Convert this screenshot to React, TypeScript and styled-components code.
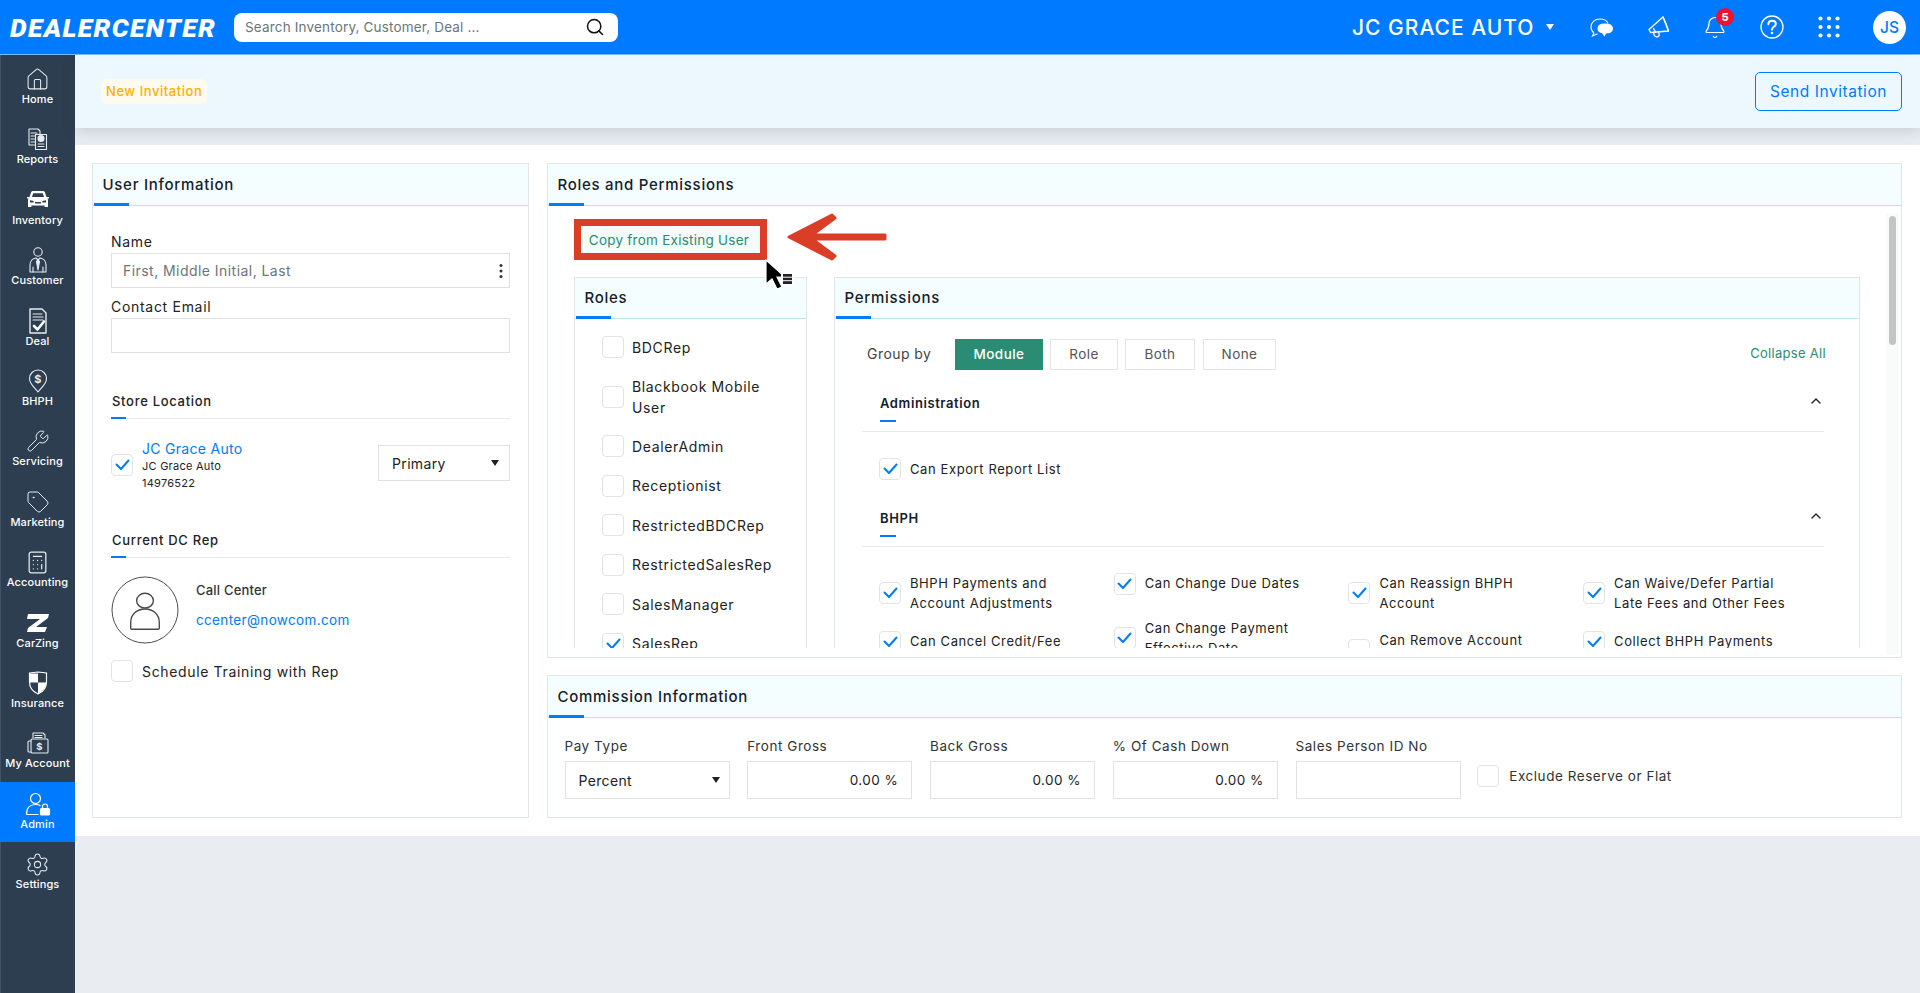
import React from "react";
import styled, { createGlobalStyle } from "styled-components";
import { House, Wrench, Tag, Calculator, Settings, Bell, Search, ChevronUp } from "lucide-react";

const FONT = `Inter, "Noto Sans", sans-serif`;
const BLUE = "#007bff";
const GREEN = "#2a8c73";

const Global = createGlobalStyle`
  html, body { margin: 0; padding: 0; height: 100%; }
  body { font-family: ${FONT}; background: #e9edf2; color: #222; overflow: hidden; }
  * { box-sizing: border-box; }
`;

const Page = styled.div`
  width: 1920px; height: 993px; display: flex; flex-direction: column; overflow: hidden;
`;

/* ---------- top bar ---------- */
const TopBar = styled.header`
  height: 55px; flex: none; background: ${BLUE}; display: flex; align-items: center; padding: 0 14px 0 10px; color: #fff;
  border-bottom: 1px solid #7fbdff;
`;
const Logo = styled.div`
  font-family: Roboto, sans-serif; font-style: italic; font-weight: 900; font-size: 26.5px; letter-spacing: 1.35px; width: 224px; color: #fff; white-space: nowrap;
`;
const SearchBox = styled.div`
  width: 384px; height: 29px; background: #fff; border-radius: 8px; display: flex; align-items: center; justify-content: space-between;
  padding: 0 13px 0 11px; color: #111;
`;
const SearchInput = styled.input`
  border: 0; outline: 0; flex: 1; font: 400 13.5px ${FONT}; letter-spacing: 0.17px; background: transparent; padding: 0;
  &::placeholder { color: #6c757d; opacity: 1; }
`;
const TopRight = styled.div`
  margin-left: auto; display: flex; align-items: center;
`;
const Dealer = styled.div`
  font-size: 21px; font-weight: 500; letter-spacing: 1px; width: 183px; white-space: nowrap; margin-right: 11px;
`;
const Caret = styled.span`
  width: 0; height: 0; border-left: 4.5px solid transparent; border-right: 4.5px solid transparent; border-top: 6px solid ${(p: { $color?: string }) => p.$color || "#fff"};
  display: block;
`;
const TopIcons = styled.div`
  display: flex; align-items: center; gap: 33px; margin-left: 35px; margin-right: 32px;
`;
const TopIcon = styled.div`
  position: relative; width: 24px; height: 28px; display: flex; align-items: center; justify-content: center;
`;
const Badge = styled.span`
  position: absolute; left: 13px; top: -5px; width: 18px; height: 18px; border-radius: 50%; background: #ee1133; color: #fff;
  font-size: 11px; font-weight: 800; display: flex; align-items: center; justify-content: center;
`;
const UserCircle = styled.div`
  width: 33px; height: 33px; border-radius: 50%; background: #fff; color: ${BLUE}; font-size: 15.5px; font-weight: 500;
  display: flex; align-items: center; justify-content: center;
`;

/* ---------- body ---------- */
const Body = styled.div`
  flex: 1; display: flex; min-height: 0;
`;
const Sidebar = styled.nav`
  width: 75px; flex: none; background: #2c3e50; padding-top: 2px; border-left: 1px solid #3f5468;
`;
const NavItem = styled.div<{ $active?: boolean }>`
  height: 60.4px; margin-left: -1px; background: ${(p) => (p.$active ? BLUE : "transparent")}; color: #fff; display: flex; flex-direction: column; align-items: center;
  padding-top: 7px; font-size: 11px; font-weight: 500; letter-spacing: 0.12px; line-height: 14px;
`;
const NavIcon = styled.div`
  height: 30px; width: 100%; display: flex; align-items: center; justify-content: center; margin-bottom: -2px;
`;
const Main = styled.main`
  flex: 1; min-width: 0; display: flex; flex-direction: column;
`;
const SubHeader = styled.div`
  height: 73px; flex: none; background: #ecf8fe; display: flex; align-items: center; justify-content: space-between;
  padding: 0 18px 0 26px; box-shadow: 0 4px 12px rgba(60, 70, 90, 0.18); position: relative;
`;
const Chip = styled.div`
  height: 25px; margin-top: -1px; padding: 0 5px; background: #fdfaf0; border-radius: 6px; color: #ffb000; font-size: 13px; font-weight: 500; display: flex; align-items: center; letter-spacing: 0.55px;
`;
const SendButton = styled.button`
  width: 147px; height: 39px; background: transparent; border: 1px solid ${BLUE}; border-radius: 5px; color: ${BLUE}; font: 400 15.5px ${FONT}; letter-spacing: 0.55px; padding: 0;
`;
const Content = styled.div`
  margin-top: 17px; background: #fff; padding: 18px 18px 18px 17px; display: grid; grid-template-columns: 437px 1fr; column-gap: 18px;
`;
const Column = styled.div`
  display: flex; flex-direction: column; gap: 17px; min-width: 0;
`;
const Card = styled.section`
  border: 1px solid #dfe5e8; background: #fff; min-width: 0;
`;
const CardHeader = styled.div<{ $h?: number }>`
  height: ${(p) => p.$h || 42}px; background: #f4fefe; border-bottom: 1px solid #bfe5e3; position: relative; display: flex; align-items: center;
  padding-left: 9.5px; padding-bottom: 1px; font-size: 15px; font-weight: 500; color: #16202b; letter-spacing: 0.72px;
  &::after { content: ""; position: absolute; left: 1px; bottom: -1px; width: 35px; height: 3px; background: ${BLUE}; }
`;

/* ---------- left card ---------- */
const LeftCard = styled(Card)`
  height: 655px;
`;
const LeftBody = styled.div`
  padding: 27px 18px 0 18px;
`;
const FieldLabel = styled.div`
  font-size: 14px; line-height: 18px; color: #222; margin-bottom: 2px; letter-spacing: 0.7px;
`;
const TextBox = styled.div<{ $mb?: number }>`
  height: 35px; border: 1px solid #dfe1e3; display: flex; align-items: center; padding: 0 6px 0 11px; margin-bottom: ${(p) => p.$mb ?? 10}px;
`;
const BoxInput = styled.input`
  border: 0; outline: 0; flex: 1; min-width: 0; padding: 0 0 1px; background: transparent; font: 400 14px ${FONT}; letter-spacing: 0.45px; color: #333;
  &::placeholder { color: #6c757d; opacity: 1; }
`;
const MiniHeading = styled.div<{ $mt: number }>`
  margin-top: ${(p) => p.$mt}px; height: 26px; border-bottom: 1px solid #e8eaec; position: relative; font-size: 13px; font-weight: 500; color: #222; letter-spacing: 0.7px; line-height: 16px; padding-left: 1px;
  &::after { content: ""; position: absolute; left: 0; bottom: -1px; width: 15px; height: 2px; background: ${BLUE}; }
`;
const Box = styled.span`
  width: 22px; height: 22px; flex: none; border: 1px solid #e1e3e6; border-radius: 4px; background: #fff; display: flex; align-items: center; justify-content: center;
`;
const StoreRow = styled.div`
  margin-top: 21px; display: flex; align-items: center; height: 50px;
`;
const StoreText = styled.div`
  margin-left: 9px; flex: 1; font-size: 11px; line-height: 17px; color: #222; letter-spacing: 0.25px;
`;
const StoreLink = styled.div`
  color: ${BLUE}; font-size: 14px; line-height: 19px; letter-spacing: 0.3px;
`;
const StoreSelect = styled.div`
  margin-top: -4px;
`;
const SelectBox = styled.div<{ $w: number; $h: number; $pad?: number }>`
  width: ${(p) => p.$w}px; height: ${(p) => p.$h}px; border: 1px solid #dfe1e3; display: flex; align-items: center; justify-content: space-between; flex: none;
  padding: 0 ${(p) => p.$pad ?? 10}px 0 13px; font-size: 14px; color: #222; letter-spacing: 0.35px; background: #fff;
`;
const RepRow = styled.div`
  margin-top: 18px; display: flex; align-items: flex-start; gap: 17px;
`;
const RepText = styled.div`
  padding-top: 5px; font-size: 13px; font-weight: 500; line-height: 18px; color: #333; letter-spacing: 0.2px;
`;
const RepMail = styled.div`
  color: ${BLUE}; font-size: 13.5px; font-weight: 400; margin-top: 12px; letter-spacing: 0.35px;
`;
const CheckLine = styled.div`
  margin-top: 16px; display: flex; align-items: center; gap: 9px; font-size: 14px; letter-spacing: 0.65px; color: #222;
`;

/* ---------- roles and permissions ---------- */
const RolesCard = styled(Card)`
  height: 495px;
`;
const RolesBody = styled.div`
  height: 451px; display: flex; align-items: flex-start; padding-bottom: 9px;
`;
const ScrollArea = styled.div`
  width: 1338px; height: 442px; overflow: hidden; padding-left: 26px; position: relative; flex: none;
`;
const ScrollTrack = styled.div`
  width: 13px; height: 442px; margin-top: 7px; background: #fafafa; padding: 3px 3px 0 3px; flex: none;
`;
const ScrollThumb = styled.div`
  height: 129px; background: #c4c4c4; border-radius: 4px;
`;
const CopyRow = styled.div`
  position: relative; margin-top: 13px; height: 41px;
`;
const CopyButton = styled.button`
  width: 193px; height: 41px; border: 7px solid #db3e26; background: #f4fcfa; color: ${GREEN}; font: 400 13.5px ${FONT}; letter-spacing: 0.25px; padding: 0 3px 0 0;
`;
const ArrowMark = styled.svg`
  position: absolute; left: 210px; top: -10px;
`;
const CursorMark = styled.svg`
  position: absolute; left: 190px; top: 40px; z-index: 3;
`;
const Split = styled.div`
  margin-top: 17px; display: grid; grid-template-columns: 233px 1026px; column-gap: 27px;
`;
const RoleList = styled.div`
  padding: 17px 0 0 27px; display: flex; flex-direction: column; gap: 17.5px;
`;
const RoleRow = styled.div`
  display: flex; align-items: center; gap: 8px; font-size: 14px; line-height: 21px; color: #222; letter-spacing: 0.65px; min-height: 22px;
`;
const PermBody = styled.div`
  padding: 20px 35px 0 27px;
`;
const Toolbar = styled.div`
  display: flex; align-items: center; height: 31px; padding-left: 5px; font-size: 14px; color: #444; letter-spacing: 0.45px;
`;
const GroupLabel = styled.span`
  width: 88px; white-space: nowrap; padding-bottom: 2px;
`;
const Segment = styled.div<{ $on?: boolean; $w: number; $gap?: number }>`
  width: ${(p) => p.$w}px; height: 31px; margin-right: ${(p) => p.$gap ?? 7}px; display: flex; align-items: center; justify-content: center; padding-bottom: 2px; font-size: 13.5px; font-weight: ${(p) => (p.$on ? 500 : 400)};
  background: ${(p) => (p.$on ? GREEN : "#fff")}; color: ${(p) => (p.$on ? "#fff" : "#555")}; border: 1px solid ${(p) => (p.$on ? GREEN : "#e2e4e6")};
`;
const CollapseAll = styled.span`
  margin-left: auto; margin-right: -2px; color: ${GREEN}; font-size: 13px; padding-bottom: 3px; letter-spacing: 0.3px;
`;
const SectionHead = styled.div<{ $mt: number }>`
  margin-top: ${(p) => p.$mt}px; height: 39px; border-bottom: 1px solid #e6e8ea; position: relative; display: flex; justify-content: space-between; padding: 0 0 0 18px;
  font-size: 13px; font-weight: 600; line-height: 20px; color: #16202b; letter-spacing: 0.6px;
  &::after { content: ""; position: absolute; left: 18px; bottom: 9px; width: 16px; height: 2px; background: ${BLUE}; }
`;
const Perms = styled.div`
  padding: 26px 0 0 17px; display: grid; grid-template-columns: repeat(4, 234.7px); row-gap: 5px;
`;
const Perm = styled.div<{ $top?: number }>`
  display: flex; align-items: center; gap: 9px; font-size: 13px; line-height: 20px; color: #222; letter-spacing: 0.6px; margin-top: ${(p) => p.$top || 0}px; padding-right: 10px; align-self: start;
`;
const PermWide = styled(Perm)`
  grid-column: span 2;
`;
const PermSolo = styled(Perm)`
  align-items: flex-start;
`;
const PermLine = styled.span`
  display: block; white-space: nowrap;
`;

/* ---------- commission ---------- */
const CommissionCard = styled(Card)`
  height: 143px;
`;
const CommissionRow = styled.div`
  padding: 19px 0 0 16.5px; display: flex; gap: 17.75px;
`;
const CommissionField = styled.div`
  width: 165px; flex: none;
`;
const CommissionLabel = styled.div`
  font-size: 13.5px; line-height: 18px; margin-bottom: 6px; color: #333; letter-spacing: 0.55px; white-space: nowrap;
`;
const NumberBox = styled.input`
  width: 165px; height: 38px; border: 1px solid #dfe1e3; outline: 0; text-align: right; padding: 0 13px 0 0; font: 400 13.5px ${FONT}; color: #222; letter-spacing: 0.45px; display: block;
`;
const ExcludeCheck = styled.div`
  display: flex; align-items: center; gap: 10px; margin: 28px 0 0 -1px; height: 22px; font-size: 13.5px; color: #333; letter-spacing: 0.55px;
`;

/* ---------- drawings ---------- */
const Check = () => (
  <svg width="15" height="12" viewBox="0 0 15 12" fill="none"><path d="M1.5 5.5 L6 10 L13.5 1.5" stroke={BLUE} strokeWidth="2" strokeLinecap="round" strokeLinejoin="round" /></svg>
);
const CheckBox = ({ on }: { on?: boolean }) => <Box>{on && <Check />}</Box>;

const line = { fill: "none", stroke: "#e6ebef", strokeWidth: 1.1, strokeLinecap: "round" as const, strokeLinejoin: "round" as const };

const NavDraw: Record<string, React.ReactNode> = {
  Home: <House size={25} strokeWidth={1} color="#e6ebef" />,
  Reports: (
    <svg width="24" height="24" viewBox="0 0 24 24" {...line}>
      <path d="M3 2h9l2 2v14H3z" /><path d="M5 6h6M5 9h4M5 12h4M5 15h4" />
      <path d="M9.5 7.5h11v15h-11z" fill="#2c3e50" /><circle cx="15" cy="11.5" r="3" fill="#e6ebef" /><path d="M12 17h6M12 19.5h6" />
    </svg>
  ),
  Inventory: (
    <svg width="24" height="20" viewBox="0 0 24 20">
      <path fill="#fff" d="M5 2.5C5.4 1.4 6.3 1 7.4 1h9.2c1.1 0 2 .4 2.4 1.5L20.5 7H23v1.5h-1.6l.6 1.2V17h-3.4v-1.6H5.4V17H2V9.7l.6-1.2H1V7h2.5zM6 7h12l-1.2-3.8H7.2zM4 10.2v2.2h3.6v-1.4zM20 10.2 16.4 11v1.4H20zM9 12v1.4h6V12z" fillRule="evenodd" />
    </svg>
  ),
  Customer: (
    <svg width="24" height="28" viewBox="0 0 24 28" {...line}>
      <circle cx="12" cy="6" r="4.2" />
      <path d="M4 26v-7c0-4 3-6.5 6-7l2 2 2-2c3 .5 6 3 6 7v7z" />
      <path d="M12 14l-1.5 1.5L12 24l1.5-8.5z" fill="#e6ebef" /><path d="M7 21v5M17 21v5" />
    </svg>
  ),
  Deal: (
    <svg width="22" height="28" viewBox="0 0 22 28" {...line}>
      <path d="M3 2h12l4 4v20H3z" strokeWidth="1.4" /><path d="M6 7h9M6 10h10M6 13h10" />
      <path d="M7 19l3.5 3.5L17 14.5" strokeWidth="2.6" stroke="#fff" />
    </svg>
  ),
  BHPH: (
    <svg width="22" height="26" viewBox="0 0 22 26" {...line}>
      <path d="M11 24C7 19 2.5 16 2.5 10.5a8.5 8.5 0 0 1 17 0C19.500 16 15 19 11 24z" />
      <text x="11" y="14.5" textAnchor="middle" fontSize="11" fontWeight="700" fill="#e6ebef" stroke="none" fontFamily="Inter">$</text>
    </svg>
  ),
  Servicing: <Wrench size={24} strokeWidth={1} color="#e6ebef" />,
  Marketing: <Tag size={24} strokeWidth={1} color="#e6ebef" />,
  Accounting: <Calculator size={25} strokeWidth={1.2} color="#e6ebef" />,
  CarZing: (
    <svg width="22" height="18" viewBox="0 0 22 18"><path fill="#fff" d="M1 0h21l-1 4L9 13h11l-2 5H0l1-4L13 5H0z" /></svg>
  ),
  Insurance: (
    <svg width="20" height="24" viewBox="0 0 20 24">
      <path fill="#fff" d="M2 2.500h8v9H2zM10 11.500h8.200C18 17 14.500 20.500 10 22.500z" />
      <path fill="none" stroke="#fff" strokeWidth="1.2" d="M1.500 2 10 1l8.500 1v9c0 6-4 10-8.500 12C5.500 21 1.500 17 1.500 11z" />
    </svg>
  ),
  "My Account": (
    <svg width="24" height="24" viewBox="0 0 24 24" {...line}>
      <path d="M7 7V2h10l2 2v3" /><path d="M9 4.500h7M9 6.500h7" />
      <rect x="5" y="8" width="17" height="14" rx="1" /><path d="M5 10H3a1 1 0 0 0-1 1v9a1 1 0 0 0 1 1h2" />
      <text x="13.500" y="19" textAnchor="middle" fontSize="9.500" fontWeight="700" fill="#e6ebef" stroke="none" fontFamily="Inter">$</text>
    </svg>
  ),
  Admin: (
    <svg width="26" height="24" viewBox="0 0 26 24" fill="none" stroke="#fff" strokeWidth="1.2">
      <circle cx="10.500" cy="6.500" r="5" /><path d="M1.500 22.500c0-7 3.500-10 9-10 2 0 3.700.4 5 1.200M1.500 22.500h12" />
      <rect x="15.500" y="16.500" width="9" height="6.500" rx="1" fill="#fff" /><path d="M17.500 16.500v-2a2.500 2.500 0 0 1 5 0v2" />
    </svg>
  ),
  Settings: <Settings size={25} strokeWidth={1} color="#e6ebef" />,
};
const NAV = Object.keys(NavDraw);

const ChatIcon = () => (
  <svg width="23" height="19" viewBox="0 0 23 19" fill="none" stroke="#fff" strokeWidth="1.1">
    <path d="M4 15C2 13.500 1 11.500 1 9 1 4.500 4.500 1 10 1c4 0 7 1.500 8 4.500" /><path d="M4 15l-1.500 3 5-2.200" />
    <path fill="#fff" d="M8 10.500C8 7.500 11 6 15 6s7.500 1.500 7.500 4.500S19.500 15 15.500 15l-1 2.500-2-2.800C10 14.300 8 13 8 10.500z" />
  </svg>
);
const HornIcon = () => (
  <svg width="23" height="22" viewBox="0 0 23 22" fill="none" stroke="#fff" strokeWidth="1.300" strokeLinejoin="round" strokeLinecap="round">
    <path d="M16 1 2 13.500 3.500 16.500 21.500 15z" /><path d="M16 1c2 4 4 9 5.500 14" /><path d="M7 16.500c-.5 2 .5 3.800 2.500 4.300 2 .4 3-1 2.600-3l-.6-1.800" /><path d="M6.500 12.500l2 3.500" />
  </svg>
);
const HelpIcon = () => (
  <svg width="24" height="24" viewBox="0 0 24 24" fill="none" stroke="#fff">
    <circle cx="12" cy="12" r="11" strokeWidth="1.300" />
    <path d="M8.300 9.200c.2-2.300 1.800-3.500 3.800-3.500 2.100 0 3.700 1.300 3.700 3.200 0 2.900-3.800 2.900-3.800 5.800" strokeWidth="2" strokeLinecap="round" />
    <circle cx="12" cy="18" r="1.300" fill="#fff" stroke="none" />
  </svg>
);
const DotsGrid = () => (
  <svg width="22" height="22" viewBox="0 0 22 22" fill="#fff">
    {[2.500, 11, 19.500].flatMap((y) => [2.500, 11, 19.500].map((x) => <circle key={`${x}-${y}`} cx={x} cy={y} r="2.100" />))}
  </svg>
);
const Kebab = () => (
  <svg width="4" height="16" viewBox="0 0 4 16" fill="#333"><circle cx="2" cy="2.500" r="1.500" /><circle cx="2" cy="8" r="1.500" /><circle cx="2" cy="13.500" r="1.500" /></svg>
);
const RepAvatar = () => (
  <svg width="68" height="68" viewBox="0 0 69 69" fill="none" stroke="#4a4a4a" style={{ flex: "none" }}>
    <circle cx="34.500" cy="34.500" r="33.500" strokeWidth="1" />
    <ellipse cx="34.500" cy="25" rx="8.500" ry="7.500" strokeWidth="1.400" />
    <path d="M20 53V47c0-8 6-13.500 14.500-13.500S49 39 49 47v6c0 .8-.5 1-1 1H21c-.5 0-1-.2-1-1z" strokeWidth="1.400" />
  </svg>
);

const PERMS: { lines: string[]; on: boolean; top?: number; solo?: boolean }[] = [
  { lines: ["BHPH Payments and", "Account Adjustments"], on: true },
  { lines: ["Can Change Due Dates"], on: true, solo: true },
  { lines: ["Can Reassign BHPH", "Account"], on: true },
  { lines: ["Can Waive/Defer Partial", "Late Fees and Other Fees"], on: true },
  { lines: ["Can Cancel Credit/Fee", "Adjustments"], on: true, top: 13, solo: true },
  { lines: ["Can Change Payment", "Effective Date"], on: true },
  { lines: ["Can Remove Account", "Notes"], on: false, top: 12 },
  { lines: ["Collect BHPH Payments"], on: true, top: 13, solo: true },
];

const ROLES: { label: React.ReactNode; on?: boolean }[] = [
  { label: "BDCRep" },
  { label: <>Blackbook Mobile<br />User</> },
  { label: "DealerAdmin" },
  { label: "Receptionist" },
  { label: "RestrictedBDCRep" },
  { label: "RestrictedSalesRep" },
  { label: "SalesManager" },
  { label: "SalesRep", on: true },
];

export default function App() {
  return (
    <Page>
      <Global />
      <TopBar>
        <Logo>DEALERCENTER</Logo>
        <SearchBox>
          <SearchInput placeholder="Search Inventory, Customer, Deal ..." readOnly />
          <Search size={20} strokeWidth={1.8} color="#111" />
        </SearchBox>
        <TopRight>
          <Dealer>JC GRACE AUTO</Dealer>
          <Caret />
          <TopIcons>
            <TopIcon><ChatIcon /></TopIcon>
            <TopIcon><HornIcon /></TopIcon>
            <TopIcon><Bell size={25} strokeWidth={1.200} color="#fff" /><Badge>5</Badge></TopIcon>
            <TopIcon><HelpIcon /></TopIcon>
            <TopIcon><DotsGrid /></TopIcon>
          </TopIcons>
          <UserCircle>JS</UserCircle>
        </TopRight>
      </TopBar>
      <Body>
        <Sidebar>
          {NAV.map((n) => (
            <NavItem key={n} $active={n === "Admin"}>
              <NavIcon>{NavDraw[n]}</NavIcon>
              {n}
            </NavItem>
          ))}
        </Sidebar>
        <Main>
          <SubHeader>
            <Chip>New Invitation</Chip>
            <SendButton>Send Invitation</SendButton>
          </SubHeader>
          <Content>
            <LeftCard>
              <CardHeader>User Information</CardHeader>
              <LeftBody>
                <FieldLabel>Name</FieldLabel>
                <TextBox>
                  <BoxInput placeholder="First, Middle Initial, Last" readOnly />
                  <Kebab />
                </TextBox>
                <FieldLabel>Contact Email</FieldLabel>
                <TextBox $mb={0}><BoxInput readOnly /></TextBox>
                <MiniHeading $mt={40}>Store Location</MiniHeading>
                <StoreRow>
                  <CheckBox on />
                  <StoreText>
                    <StoreLink>JC Grace Auto</StoreLink>
                    JC Grace Auto<br />14976522
                  </StoreText>
                  <StoreSelect><SelectBox $w={132} $h={36}>Primary<Caret $color="#222" /></SelectBox></StoreSelect>
                </StoreRow>
                <MiniHeading $mt={42}>Current DC Rep</MiniHeading>
                <RepRow>
                  <RepAvatar />
                  <RepText>
                    Call Center
                    <RepMail>ccenter@nowcom.com</RepMail>
                  </RepText>
                </RepRow>
                <CheckLine><CheckBox />Schedule Training with Rep</CheckLine>
              </LeftBody>
            </LeftCard>
            <Column>
              <RolesCard>
                <CardHeader>Roles and Permissions</CardHeader>
                <RolesBody>
                  <ScrollArea>
                    <CopyRow>
                      <CopyButton>Copy from Existing User</CopyButton>
                      <ArrowMark width="106" height="56" viewBox="0 0 106 56">
                        <path d="M5 28 48 6 51 9 28 26H101V30H28L51 47 48 50z" fill="#db3e26" stroke="#db3e26" strokeWidth="3" strokeLinejoin="round" />
                      </ArrowMark>
                      <CursorMark width="34" height="34" viewBox="0 0 34 34">
                        <path d="M2 1v24l6-5 5 10 5-2-5-10h8z" fill="#000" stroke="#fff" strokeWidth="1.200" />
                        <rect x="17" y="13" width="13" height="14" rx="1" fill="#fff" />
                        <rect x="19" y="15" width="9" height="10" fill="#222" />
                        <path d="M19 18.200h9M19 21.700h9" stroke="#fff" strokeWidth="1" />
                      </CursorMark>
                    </CopyRow>
                    <Split>
                      <Card>
                        <CardHeader $h={41}>Roles</CardHeader>
                        <RoleList>
                          {ROLES.map((r, i) => (
                            <RoleRow key={i}><CheckBox on={r.on} /><span>{r.label}</span></RoleRow>
                          ))}
                        </RoleList>
                      </Card>
                      <Card>
                        <CardHeader $h={41}>Permissions</CardHeader>
                        <PermBody>
                          <Toolbar>
                            <GroupLabel>Group by</GroupLabel>
                            <Segment $on $w={88}>Module</Segment>
                            <Segment $w={68}>Role</Segment>
                            <Segment $w={70} $gap={8}>Both</Segment>
                            <Segment $w={73}>None</Segment>
                            <CollapseAll>Collapse All</CollapseAll>
                          </Toolbar>
                          <SectionHead $mt={23}>Administration<ChevronUp size={16} strokeWidth={2} color="#222" /></SectionHead>
                          <Perms>
                            <PermWide><CheckBox on /><span>Can Export Report List</span></PermWide>
                          </Perms>
                          <SectionHead $mt={28}>BHPH<ChevronUp size={16} strokeWidth={2} color="#222" /></SectionHead>
                          <Perms>
                            {PERMS.map((p) => {
                              const Item = p.solo ? PermSolo : Perm;
                              return (
                                <Item key={p.lines[0]} $top={p.top}>
                                  <CheckBox on={p.on} />
                                  <span>{p.lines.map((l) => <PermLine key={l}>{l}</PermLine>)}</span>
                                </Item>
                              );
                            })}
                          </Perms>
                        </PermBody>
                      </Card>
                    </Split>
                  </ScrollArea>
                  <ScrollTrack><ScrollThumb /></ScrollTrack>
                </RolesBody>
              </RolesCard>
              <CommissionCard>
                <CardHeader>Commission Information</CardHeader>
                <CommissionRow>
                  <CommissionField>
                    <CommissionLabel>Pay Type</CommissionLabel>
                    <SelectBox $w={165} $h={38} $pad={9}>Percent<Caret $color="#222" /></SelectBox>
                  </CommissionField>
                  <CommissionField>
                    <CommissionLabel>Front Gross</CommissionLabel>
                    <NumberBox defaultValue="0.00 %" readOnly />
                  </CommissionField>
                  <CommissionField>
                    <CommissionLabel>Back Gross</CommissionLabel>
                    <NumberBox defaultValue="0.00 %" readOnly />
                  </CommissionField>
                  <CommissionField>
                    <CommissionLabel>% Of Cash Down</CommissionLabel>
                    <NumberBox defaultValue="0.00 %" readOnly />
                  </CommissionField>
                  <CommissionField>
                    <CommissionLabel>Sales Person ID No</CommissionLabel>
                    <NumberBox readOnly />
                  </CommissionField>
                  <ExcludeCheck><CheckBox />Exclude Reserve or Flat</ExcludeCheck>
                </CommissionRow>
              </CommissionCard>
            </Column>
          </Content>
        </Main>
      </Body>
    </Page>
  );
}
